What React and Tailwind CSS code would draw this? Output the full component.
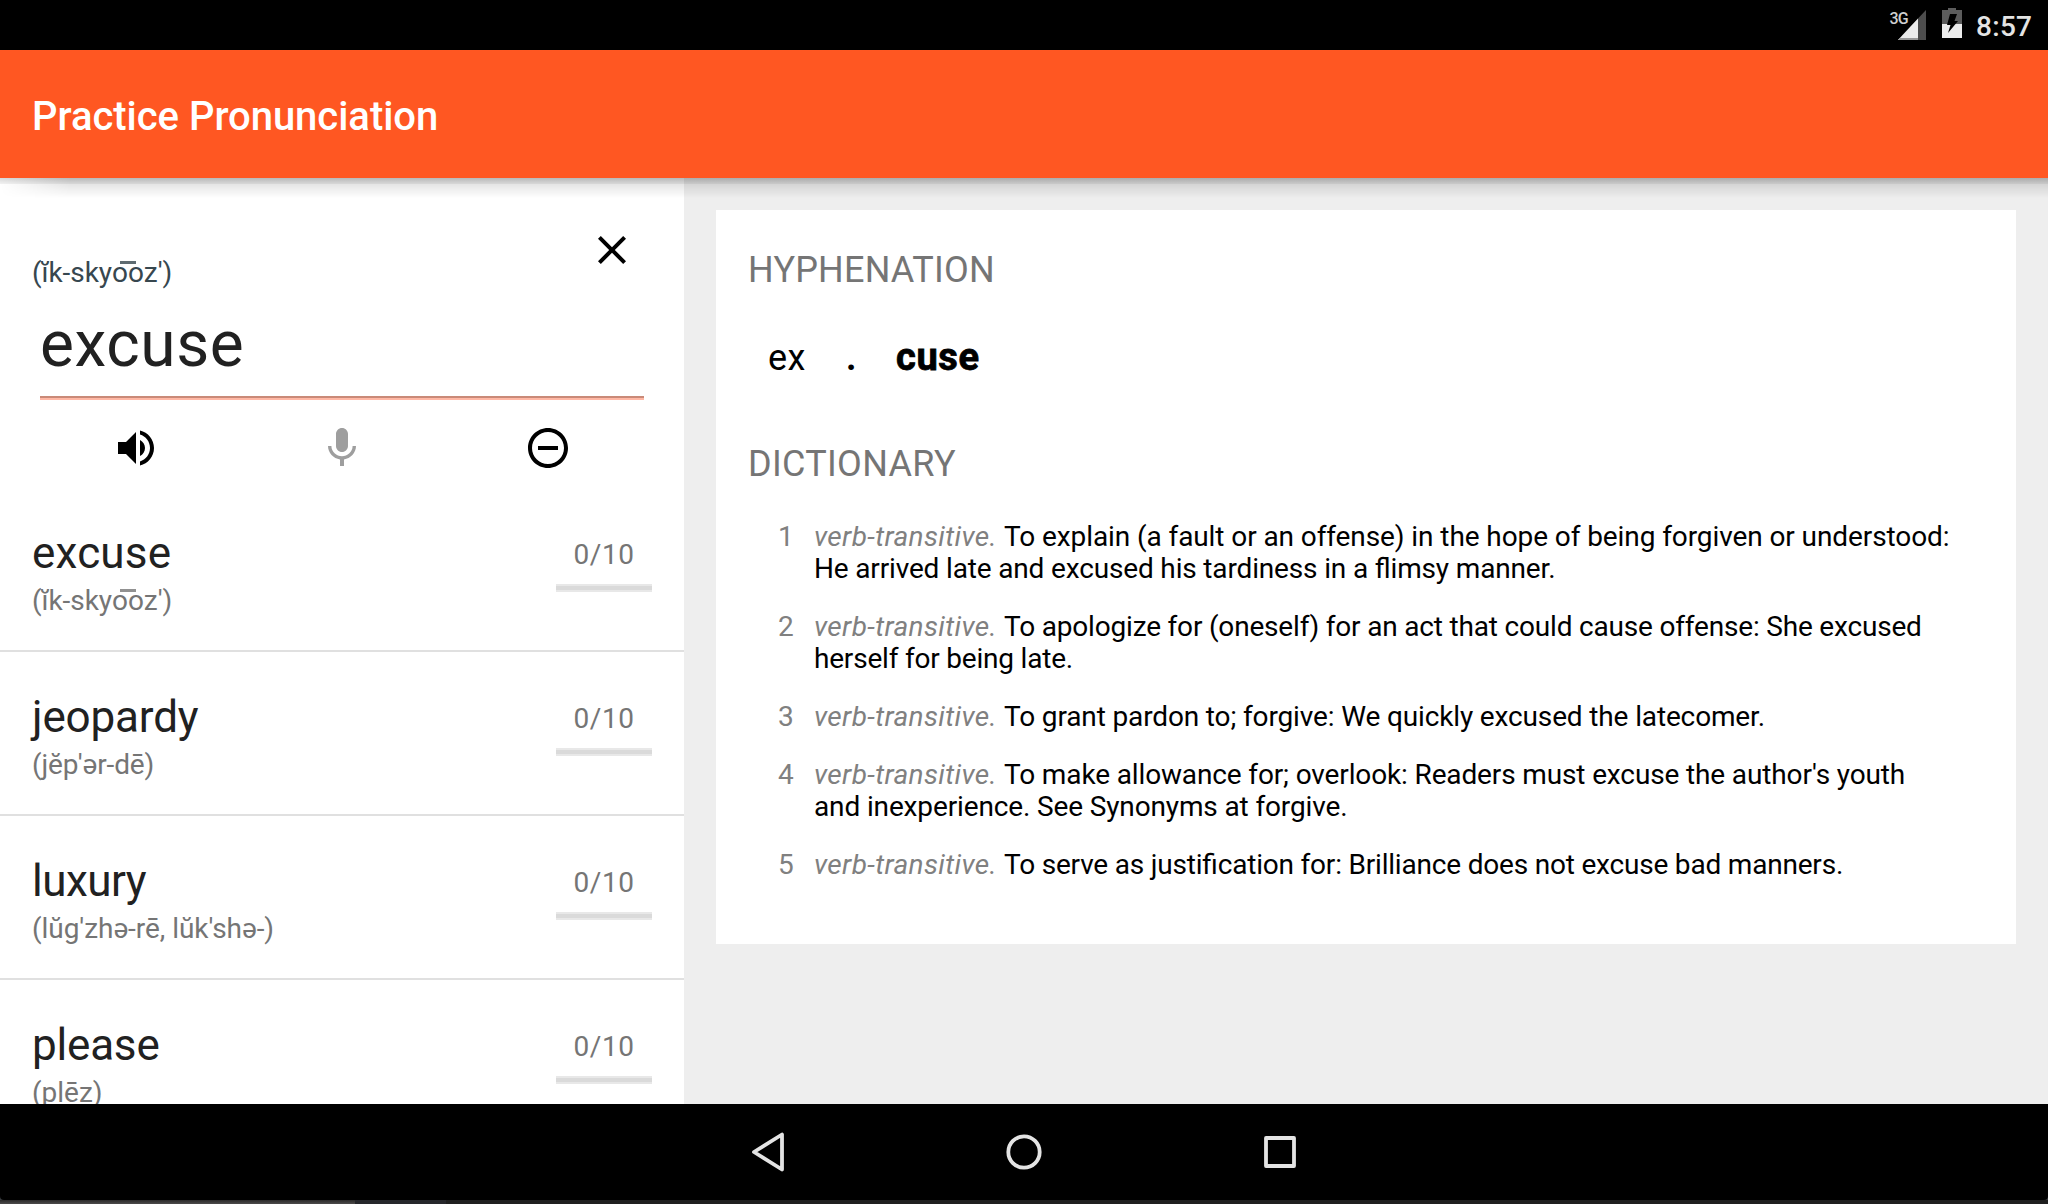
const words = [
  { word: "excuse", tracking: "tracking-[0.2px]", phonetic: <Excuse />, ptrack: "tracking-[-0.05px]" },
  { word: "jeopardy", tracking: "tracking-[-0.15px]", phonetic: "(jĕp'ər-dē)", ptrack: "tracking-[-0.15px]" },
  { word: "luxury", tracking: "tracking-[-0.5px]", phonetic: "(lŭg'zhə-rē, lŭk'shə-)", ptrack: "tracking-[-0.05px]" },
  { word: "please", tracking: "tracking-[-0.2px]", phonetic: "(plēz)", ptrack: "" },
];

const definitions = [
  [
    ["To explain (a fault or an offense) in the hope of being forgiven or understood:", "tracking-[-0.09px]"],
    ["He arrived late and excused his tardiness in a flimsy manner.", "tracking-[-0.157px]"],
  ],
  [
    ["To apologize for (oneself) for an act that could cause offense: She excused", "tracking-[-0.185px]"],
    ["herself for being late.", "tracking-[-0.2px]"],
  ],
  [["To grant pardon to; forgive: We quickly excused the latecomer.", "tracking-[-0.14px]"]],
  [
    ["To make allowance for; overlook: Readers must excuse the author's youth", "tracking-[-0.135px]"],
    ["and inexperience. See Synonyms at forgive.", "tracking-[-0.135px]"],
  ],
  [["To serve as justification for: Brilliance does not excuse bad manners.", "tracking-[-0.195px]"]],
];

// "ik-skyooz" with one macron spanning both o's
function Excuse() {
  return (
    <>
      (ĭk-sky
      <span className="relative inline-block">
        oo
        <span className="absolute top-[5px] left-2 h-[3px] w-[16px] bg-current opacity-80" />
      </span>
      z')
    </>
  );
}

function StatusBar() {
  return (
    <header className="flex h-[50px] shrink-0 items-start justify-end bg-black pr-4 text-[#e4e4e4]">
      <span className="mt-[9px] -mr-[10px] text-[16px] leading-[19px] font-medium tracking-[-0.7px] text-[#cfcfcf]">3G</span>
      <svg className="mt-[10px]" width="28" height="30" viewBox="0 0 28 30">
        <path d="M28 0V30H0Z" fill="#4d4d4d" />
        <path d="M20 8.6V30H0Z" fill="#ececec" />
        <path d="M2 28H20V30H0Z" fill="#999" />
      </svg>
      <svg className="mt-2 ml-4" width="20" height="30" viewBox="0 0 20 30">
        <path d="M6 0H14V2H20V16H0V2H6Z" fill="#5c5c5c" />
        <path d="M0 16H20V30H0Z" fill="#ececec" />
        <path d="M8 6H15L12.5 13H16L6 25L8.5 17H5Z" fill="#000" />
      </svg>
      <span className="mt-2.5 ml-[14px] w-14 text-[28px] leading-[33px] font-medium tracking-[0.3px]">8:57</span>
    </header>
  );
}

function Editor() {
  return (
    <section className="h-[310px] shrink-0">
      <div className="flex justify-between pl-8 pr-12">
        <span className="mt-[78px] text-[28px] leading-[33px] tracking-[-0.05px] text-[#37474f]"><Excuse /></span>
        <svg className="mt-12" width="48" height="48" viewBox="0 0 24 24">
          <path d="M19 6.41L17.59 5 12 10.59 6.41 5 5 6.41 10.59 12 5 17.59 6.41 19 12 13.41 17.59 19 19 17.59 13.41 12z" />
        </svg>
      </div>
      <div className="mx-10 mt-[18px] flex h-[93px] flex-col justify-between">
        <span className="text-[64px] leading-[75px] tracking-[0.6px] text-[#212121]">excuse</span>
        <span className="h-1 w-[604px] border-b-2 border-[#ffb8a5] bg-[#c98a78]" />
      </div>
      <div className="mx-[33px] mt-6 grid grid-cols-3 justify-items-center">
        <svg width="48" height="48" viewBox="0 0 24 24">
          <path d="M3 9v6h4l5 5V4L7 9H3zm13.5 3c0-1.77-1.02-3.29-2.5-4.03v8.05c1.48-.73 2.5-2.25 2.5-4.02zM14 3.23v2.06c2.89.86 5 3.54 5 6.71s-2.11 5.85-5 6.71v2.06c4.01-.91 7-4.49 7-8.77s-2.99-7.86-7-8.77z" />
        </svg>
        <svg width="48" height="48" viewBox="0 0 24 24" fill="#9e9e9e">
          <path d="M12 14c1.66 0 2.99-1.34 2.99-3L15 5c0-1.66-1.34-3-3-3S9 3.34 9 5v6c0 1.66 1.34 3 3 3zm5.3-3c0 3-2.54 5.1-5.3 5.1S6.7 14 6.7 11H5c0 3.41 2.72 6.23 6 6.72V21h2v-3.28c3.28-.48 6-3.3 6-6.72h-1.7z" />
        </svg>
        <svg width="48" height="48" viewBox="0 0 24 24">
          <path d="M7 11v2h10v-2H7zm5-9C6.48 2 2 6.48 2 12s4.48 10 10 10 10-4.48 10-10S17.52 2 12 2zm0 18c-4.41 0-8-3.59-8-8s3.59-8 8-8 8 3.59 8 8-3.59 8-8 8z" />
        </svg>
      </div>
    </section>
  );
}

function WordRow({ item }) {
  return (
    <li className="flex h-[164px] shrink-0 justify-between border-b-2 border-[#e0e0e0] pr-8 pl-8">
      <div className="flex flex-col">
        <span className={`mt-[39px] text-[44px] leading-[52px] text-[#212121] ${item.tracking}`}>{item.word}</span>
        <span className={`mt-[5px] text-[28px] leading-[33px] whitespace-nowrap text-[#757575] ${item.ptrack}`}>{item.phonetic}</span>
      </div>
      <div className="mt-[50px] flex w-24 flex-col items-center">
        <span className="text-[28px] leading-[33px] tracking-[0.5px] text-[#757575]">0/10</span>
        <span className="mt-[13px] h-2 w-full border-y-2 border-[#e8e8e8] bg-[#dadada]" />
      </div>
    </li>
  );
}

function Detail() {
  return (
    <main className="flex-1 px-8 pt-8">
      <article className="h-[734px] bg-white px-8">
        <h2 className="pt-[39px] text-[36px] leading-[42px] tracking-[0.2px] text-[#757575]">HYPHENATION</h2>
        <div className="mt-[46px] flex h-[42px] text-[36px] leading-[42px]">
          <span className="ml-5 w-[78px] tracking-[0.4px]">ex</span>
          <span className="w-[50px] font-bold">.</span>
          <span className="text-[38px] leading-10 font-bold tracking-[0.6px] [-webkit-text-stroke:0.8px_black]">cuse</span>
        </div>
        <h2 className="mt-[64px] text-[36px] leading-[42px] tracking-[0.3px] text-[#757575]">DICTIONARY</h2>
        <ol className="mt-9 flex flex-col gap-[26px] pl-[30px] text-[28px] leading-8 whitespace-nowrap [font-feature-settings:'liga']">
          {definitions.map((lines, i) => (
            <li key={i} className="flex">
              <span className="w-9 text-[#808080]">{i + 1}</span>
              <div className="flex flex-col">
                {lines.map(([text, tracking], k) => (
                  <div key={k} className="flex">
                    {k === 0 && <em className="w-[190px] tracking-[0.36px] text-[#808080]">verb-transitive.</em>}
                    <span className={tracking}>{text}</span>
                  </div>
                ))}
              </div>
            </li>
          ))}
        </ol>
      </article>
    </main>
  );
}

function NavBar() {
  return (
    <div className="shrink-0 bg-[#3a3d40]">
      <nav className="flex h-24 items-center justify-center rounded-b-[4px] bg-black">
        {[
          <path key="back" d="M78 30.5V65.5L50 48Z" />,
          <circle key="home" cx="64" cy="48" r="15.7" />,
          <rect key="recent" x="50" y="34" width="28" height="28" />,
        ].map((shape, i) => (
          <span key={i} className="flex w-64 justify-center">
            <svg width="128" height="96" fill="none" stroke="#e4e4e4" strokeWidth="3.8" strokeLinejoin="round">{shape}</svg>
          </span>
        ))}
      </nav>
    </div>
  );
}

export default function App() {
  return (
    <div className="flex h-[1204px] w-[2048px] flex-col overflow-hidden bg-[#eeeeee] font-[Roboto,sans-serif] text-black">
      <StatusBar />
      <div className="h-32 shrink-0 bg-[#ff5722] px-8 pt-[43px]">
        <h1 className="text-[40px] leading-[47px] font-medium tracking-[-0.03px] text-white">Practice Pronunciation</h1>
      </div>
      <div className="relative flex min-h-0 flex-1 overflow-hidden">
        <aside className="flex w-[684px] shrink-0 flex-col overflow-hidden bg-white">
          <Editor />
          <ul className="flex flex-col">
            {words.map((item) => <WordRow key={item.word} item={item} />)}
          </ul>
        </aside>
        <Detail />
        <div className="absolute inset-x-0 top-0 h-1.5 bg-linear-to-b from-black/15 to-black/5" />
        <div className="absolute inset-x-0 top-0 h-5 bg-linear-to-b from-black/15 to-transparent [mask-image:linear-gradient(to_right,transparent,black_70px)]" />
      </div>
      <NavBar />
      <footer className="flex h-1 shrink-0 bg-[#1f1f1f]">
        <span className="w-[355px] bg-linear-to-b from-[#2c2b2b] to-[#4c4a4a]" />
        <span className="w-[91px] bg-[#26272b]" />
      </footer>
    </div>
  );
}
